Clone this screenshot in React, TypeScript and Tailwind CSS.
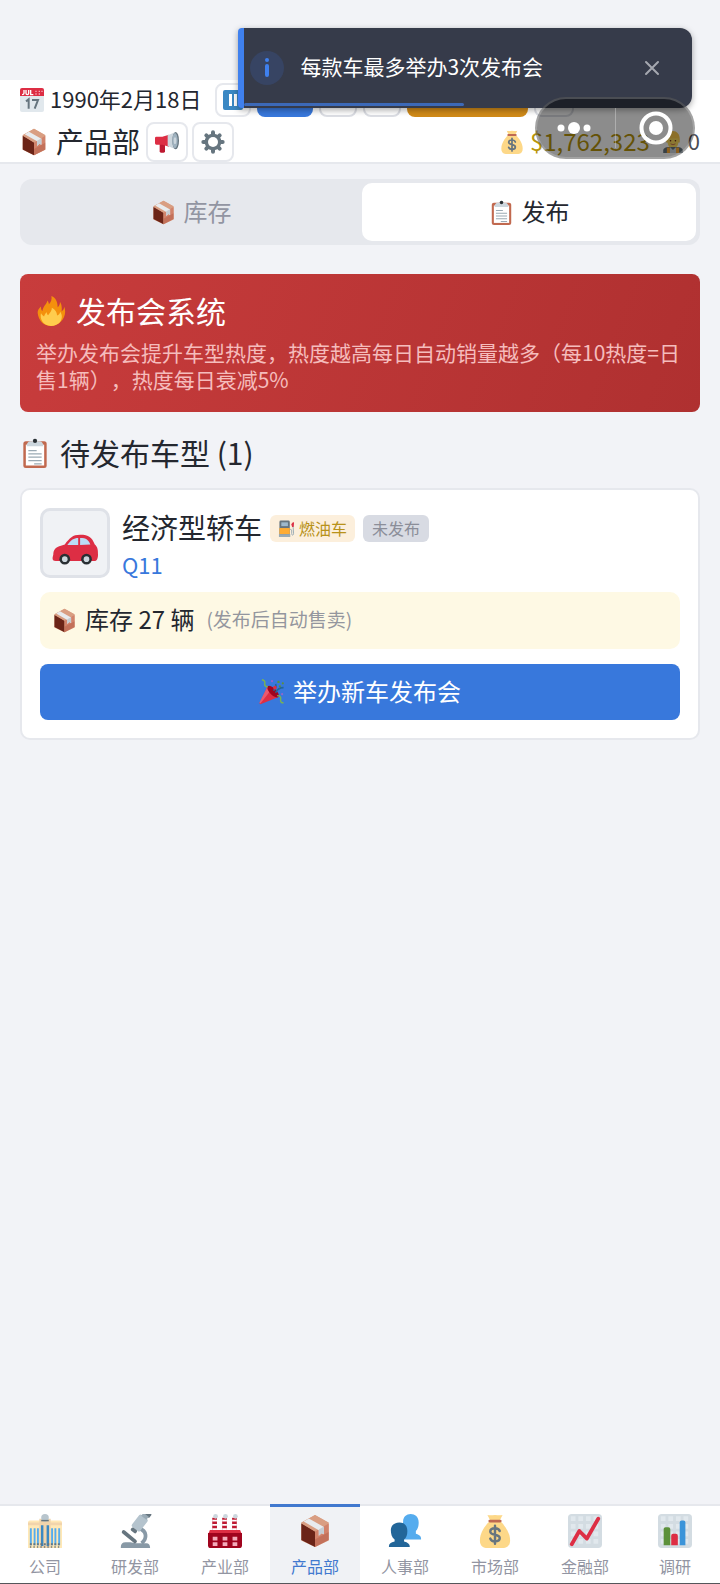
import { useState } from "react";
import type { ReactNode } from "react";

type IconProps = { className?: string };

function Svg({ className, children }: { className?: string; children: ReactNode }) {
  return (
    <svg viewBox="0 0 36 36" className={`shrink-0 ${className ?? ""}`} aria-hidden="true">
      {children}
    </svg>
  );
}

const BoxIcon = ({ className }: IconProps) => (
  <Svg className={className}>
    <path fill="#d99e82" d="M18 1 32.500 9v19L18 35 3.500 28V9z" />
    <path fill="#6b2417" d="M3.500 10 18 18.500V35L3.500 27.500z" />
    <path fill="#d2836b" d="M18 18.500 32.500 10v17.500L18 35z" />
    <path fill="#a8513b" d="M18 27 32.500 19v8.500L18 35z" opacity=".35" />
    <path fill="#d99e82" d="M18 1 32.500 9.500 18 18.500 3.500 9.500z" />
    <path fill="#e8ebee" d="M6 8 11.500 4.800 27.500 13.800v7.700l-2.500-1.200-3 2.800v-6z" />
    <path fill="#c5cdd3" d="m22 16.300 5.500-3v8.200L25 20.300l-3 2.800z" />
  </Svg>
);

const CalendarIcon = ({ className }: IconProps) => (
  <Svg className={className}>
    <path fill="#e1e8ed" d="M0 10h36v23a3 3 0 0 1-3 3H3a3 3 0 0 1-3-3z" />
    <path fill="#dd2e44" d="M3 0h30a3 3 0 0 1 3 3v9H0V3a3 3 0 0 1 3-3z" />
    <path stroke="#fff" strokeWidth="2" fill="none" d="M6 3v5q0 2-3 2M9 3v5q0 2 2 2t2-2V3M16 3v7h4" />
    <path fill="#f4abba" d="M23 4h2v2h-2zM28 4h2v2h-2zM32 4h2v2h-2zM23 8h2v2h-2zM28 8h2v2h-2z" />
    <path fill="none" stroke="#66757f" strokeWidth="3" d="m9 20 4-3v14M18 18h9l-5 13" />
  </Svg>
);

const MegaphoneIcon = ({ className }: IconProps) => (
  <Svg className={className}>
    <path fill="#be1931" d="M7 20h8v12q0 2-2 2H9q-2 0-2-2z" />
    <path fill="#dd2e44" d="M2 10h9l10-3v18l-10-3H2q-2 0-2-2v-8q0-2 2-2z" />
    <path fill="#ccd6dd" d="M19 8 31 3v26l-12-5z" />
    <ellipse cx="31" cy="16" rx="5" ry="13" fill="#66757f" />
    <ellipse cx="30" cy="16" rx="4" ry="11.500" fill="#9fb2bf" />
    <ellipse cx="30" cy="16" rx="2" ry="5" fill="#ccd6dd" />
  </Svg>
);

const GearIcon = ({ className }: IconProps) => (
  <Svg className={className}>
    <g stroke="#66757f" strokeWidth="6" strokeLinecap="round">
      <path d="M18 3.500v29M3.500 18h29M8 8l20 20M28 8 8 28" />
    </g>
    <circle cx="18" cy="18" r="12.500" fill="#66757f" />
    <circle cx="18" cy="18" r="7.500" fill="#fff" />
  </Svg>
);

const MoneyIcon = ({ className }: IconProps) => (
  <Svg className={className}>
    <path fill="#fdd888" d="M12 8h12c5 5 10 12 10 20 0 6-4 8-8 8H10c-4 0-8-2-8-8C2 20 7 13 12 8z" />
    <path fill="#fdd888" d="M10 1c3 1 5 0 8 0s5 1 8 0l-3 6H13z" />
    <rect x="11" y="6" width="14" height="3" rx="1.500" fill="#bf6952" />
    <path
      fill="none"
      stroke="#67757f"
      strokeWidth="2.600"
      strokeLinecap="round"
      d="M23 18q-1-3-5-3-5 0-5 3.500 0 2.500 5 3.500t5 3.500q0 3.500-5 3.500-4 0-5-3M18 12.500v19"
    />
  </Svg>
);

const WorkerIcon = ({ className }: IconProps) => (
  <Svg className={className}>
    <path fill="#ffcc4d" d="M7 13C7 5 12 0 18 0s11 5 11 13v6H7z" />
    <path fill="#ffdc5d" d="M9 12h18v5c0 7-4 11-9 11s-9-4-9-11z" />
    <path fill="#66757f" d="M2 36v-4c0-4 4-6 9-6h14c5 0 9 2 9 6v4z" />
    <path fill="#ffac33" d="M8 27h5v9H8zM23 27h5v9h-5z" />
    <path fill="#ccd6dd" d="m13 26 5 5 5-5v10H13z" />
    <circle cx="14" cy="16" r="1.300" fill="#662113" />
    <circle cx="22" cy="16" r="1.300" fill="#662113" />
    <path d="M14 21q4 3 8 0" stroke="#c1694f" strokeWidth="1.500" fill="none" />
  </Svg>
);

const ClipboardIcon = ({ className }: IconProps) => (
  <Svg className={className}>
    <rect x="4" y="4" width="28" height="32" rx="3" fill="#c1694f" />
    <path fill="#fff" d="M7 8h22v25H7z" />
    <path fill="#ccd6dd" d="M12 4h3a3 3 0 0 1 6 0h3q4 1 4 6H8q0-5 4-6z" />
    <circle cx="18" cy="3.500" r="2.500" fill="#292f33" />
    <path stroke="#9aaab4" strokeWidth="1.500" d="M10 15h10M10 19h16M10 23h16M10 27h16M17 31h9" />
  </Svg>
);

const FireIcon = ({ className }: IconProps) => (
  <Svg className={className}>
    <path
      fill="#f4900c"
      d="M35 19c0-2.100-.4-4.100-1-6-.6 3-1.500 4.500-3.300 5.500.5-2.500.5-8-1.900-11.200-.2 3-.9 4.700-2.800 6.200C26 8 24 2 18.500 0c.7 4.500-.5 7-3 10-.3-2-.9-3.500-2-4.500.1 4-5 6.500-5.800 12.500-1-.8-1.800-2.500-1.700-5.500-2.600 2.100-4.200 4.600-4 8C3 30 9.500 36 18 36s17-7.600 17-17z"
    />
    <path
      fill="#ffcc4d"
      d="M31 25c.1-2-.6-4-2-6-.4 2.500-1.800 4-3.800 4.500C25.500 20 23 16 19 14c.3 3.500-2.500 6-4.500 9-1-.7-1.500-2-1.500-3.500-1.500 1-2.800 3-3.300 5C8 23.500 6.500 22 6 20.500 4 28 9 36 18 36s13-6 13-11z"
    />
  </Svg>
);

const CarIcon = ({ className }: IconProps) => (
  <Svg className={className}>
    <path
      fill="#dd2e44"
      d="M1 24c0-4 2-6 6-7l3-1c4-5 6-7.500 12-7.500 7 0 9 2 11.500 7.500 2.500 2 2.500 5 2.500 8 0 3-1 5-3 5H3q-3 0-2.500-3z"
    />
    <path fill="#bbddf5" d="M12 16.500C15 12.500 17 11 20.500 11v5.500zM22 11c5 0 6.500 1.500 8 5l-8 .5z" />
    <circle cx="10" cy="27.500" r="4.200" fill="#292f33" />
    <circle cx="27" cy="27.500" r="4.200" fill="#292f33" />
    <circle cx="10" cy="27.500" r="2.200" fill="#ccd6dd" />
    <circle cx="27" cy="27.500" r="2.200" fill="#ccd6dd" />
  </Svg>
);

const FuelIcon = ({ className }: IconProps) => (
  <Svg className={className}>
    <path
      fill="none"
      stroke="#99aab5"
      strokeWidth="2"
      d="M25 20h2q2 0 2 3v6q0 3 2 3t2-4l-1-13V8"
    />
    <path fill="#dd2e44" d="m28 9 4-5 2 2-1 9h-3z" />
    <rect x="3" y="1" width="22" height="34" rx="3" fill="#66757f" />
    <path fill="#ffac33" d="M3 17h22v13H3z" />
    <rect x="7" y="5" width="14" height="8" fill="#9fb9cb" />
    <path fill="#99aab5" d="M2 30h24v6H2z" />
  </Svg>
);

const PartyIcon = ({ className }: IconProps) => (
  <Svg className={className}>
    <path fill="#dd2e44" d="M12 10 27 25 2 35q-2 0-1-2z" />
    <path fill="#ea596e" d="m12 10 5 5L2 34q-2 0-1-2z" />
    <ellipse cx="19.500" cy="17.500" rx="4.500" ry="10.500" fill="#a0041e" transform="rotate(-45 19.500 17.500)" />
    <path fill="none" stroke="#226699" strokeWidth="2.200" d="M20 16q5-4 3-9M23 19q3-7 11-7" />
    <path fill="none" stroke="#77b255" strokeWidth="2" d="M4 1q5 1 4 5t4 5M25 23q6 0 5 5t4 5" />
    <g fill="#9266cc">
      <circle cx="18" cy="3" r="1.500" />
      <circle cx="32" cy="21" r="1.500" />
    </g>
    <g fill="#5c913b">
      <circle cx="27" cy="4" r="1.700" />
      <circle cx="33" cy="6" r="1.500" />
      <circle cx="29" cy="10" r="1.500" />
    </g>
    <circle cx="22" cy="12" r="2.500" fill="#dd2e44" />
  </Svg>
);

const OfficeIcon = ({ className }: IconProps) => (
  <Svg className={className}>
    <path fill="#ffe8b6" d="M0 9q0-2 2-2h32q2 0 2 2v27H0z" />
    <path fill="#f1d4ac" d="M12 5h12v31H12zM0 9h12v3H0zM24 9h12v3H24z" />
    <circle cx="18" cy="4" r="4" fill="#b8c5cd" />
    <path stroke="#55acee" strokeWidth="2" d="M3 15v18M7 15v18M10.500 15v18M25.500 15v18M29 15v18M33 15v18" />
    <path stroke="#3b88c3" strokeWidth="2.600" d="M15 12v22M21 12v22" />
    <path stroke="#66757f" strokeWidth="2" strokeDasharray="2 1.700" d="M2 32h32" />
    <path stroke="#66757f" strokeWidth="1.500" strokeDasharray="1.500 2.200" d="M2 35h32" />
    <path stroke="#66757f" strokeWidth="1.500" d="M14 7h8" />
  </Svg>
);

const MicroscopeIcon = ({ className }: IconProps) => (
  <Svg className={className}>
    <path fill="none" stroke="#8899a6" strokeWidth="4" d="M22 15c9 3 9 11 3 16" />
    <path fill="#8899a6" d="M3 35q0-5 5-5h5l6 1h11q4 0 4 5H3z" />
    <path stroke="#66757f" strokeWidth="4" strokeLinecap="round" d="m6 19 12 10" />
    <g transform="rotate(38 22 10)">
      <rect x="17" y="1" width="11" height="16" rx="2" fill="#b4c3cd" />
      <rect x="19" y="17" width="7" height="4" rx="1.500" fill="#66757f" />
      <rect x="18" y="-6" width="9" height="5" rx="1" fill="#66757f" />
      <rect x="19" y="-2" width="7" height="4" fill="#99aab5" />
    </g>
  </Svg>
);

const FactoryIcon = ({ className }: IconProps) => (
  <Svg className={className}>
    {[7, 17.5, 28].map((x) => (
      <g key={x}>
        <path stroke="#be1931" strokeWidth="5" d={`M${x} 4v16`} />
        <path stroke="#fff" strokeWidth="5" strokeDasharray="2 2.500" d={`M${x} 6v11`} />
        <circle cx={x + 1} cy="2.500" r="2.500" fill="#ccd6dd" />
      </g>
    ))}
    <path fill="#dd2e44" d="M2 17h32l2 5H0z" />
    <path fill="#a0041e" d="M0 20h36v13q0 3-3 3H3q-3 0-3-3z" />
    <path fill="#f4abba" d="M5 24h5v4H5zM15.500 24h5v4h-5zM26 24h5v4h-5zM5 30h5v4H5zM15.500 30h5v4h-5zM26 30h5v4h-5z" />
  </Svg>
);

const PeopleIcon = ({ className }: IconProps) => (
  <Svg className={className}>
    <path
      fill="#55acee"
      d="M16 8c0-5 3.500-8 8-8s8.500 3 8.500 9c0 4-1 7-3 9v3c3 1 5.500 2 5.500 5v1H15z"
    />
    <path
      fill="#226699"
      d="M3 17c0-5 4-8 9-8s8.500 3 8.500 9c0 4-1 7-3.500 9v2c4 1 6 3 6 5v1H1v-1c0-3 2-4 6-5v-2c-3-2-4-6-4-10z"
    />
  </Svg>
);

const Grid = () => (
  <>
    <rect x="0" y="0" width="36" height="36" rx="4" fill="#d3dce2" />
    <path
      stroke="#e1e8ed"
      strokeWidth="5"
      strokeDasharray="5 3"
      d="M3 5h31M3 13h31M3 21h31M3 29h31"
    />
  </>
);

const TrendIcon = ({ className }: IconProps) => (
  <Svg className={className}>
    <Grid />
    <path
      fill="none"
      stroke="#dd2e44"
      strokeWidth="4"
      strokeLinecap="round"
      strokeLinejoin="round"
      d="m4 32 8-14 8 8L32 5"
    />
  </Svg>
);

const BarsIcon = ({ className }: IconProps) => (
  <Svg className={className}>
    <Grid />
    <path fill="#5c913b" d="M6 33V16q0-2 2-2h3q2 0 2 2v17z" />
    <path fill="#dd2e44" d="M14 33V23q0-2 2-2h3q2 0 2 2v10z" />
    <path fill="#3b94d9" d="M23 33V9q0-2 2-2h2q2 0 2 2v24z" />
  </Svg>
);

const departments = [
  { name: "公司", Icon: OfficeIcon },
  { name: "研发部", Icon: MicroscopeIcon },
  { name: "产业部", Icon: FactoryIcon },
  { name: "产品部", Icon: BoxIcon },
  { name: "人事部", Icon: PeopleIcon },
  { name: "市场部", Icon: MoneyIcon },
  { name: "金融部", Icon: TrendIcon },
  { name: "调研", Icon: BarsIcon },
];

function Header() {
  return (
    <header className="mt-20 flex flex-col gap-[5px] border-b-2 border-[#e6e8ed] bg-white px-5 pt-[3px]">
      <div className="flex h-[34px] items-center gap-[6px]">
        <CalendarIcon className="size-6" />
        <span className="mr-2 pb-[3px] text-[22px] whitespace-nowrap">1990年2月18日</span>
        <button
          aria-label="暂停"
          className="flex h-[34px] w-9 items-center justify-center rounded-lg border-2 border-[#e6e8ed] bg-white"
        >
          <svg viewBox="0 0 20 20" className="size-5" aria-hidden="true">
            <rect width="20" height="20" rx="2" fill="#3b88c3" />
            <path fill="#fff" d="M6 4h3v12H6zM11 4h3v12h-3z" />
          </svg>
        </button>
        <button aria-label="1倍速" className="h-[34px] w-14 rounded-lg bg-[#3878dc]" />
        <button aria-label="2倍速" className="h-[34px] w-[38px] rounded-lg border-2 border-[#dcdee4] bg-white" />
        <button aria-label="3倍速" className="h-[34px] w-[38px] rounded-lg border-2 border-[#dcdee4] bg-white" />
        <button aria-label="排行" className="h-[34px] w-[121px] rounded-lg bg-[#d08a18]" />
        <button aria-label="存档" className="h-[34px] w-10 rounded-lg border-2 border-[#dcdee4] bg-white" />
      </div>
      <div className="flex h-10 items-center justify-between">
        <div className="flex items-center">
          <BoxIcon className="size-7" />
          <h1 className="ml-2 pb-[3px] text-[28px] leading-9">产品部</h1>
          <button
            aria-label="公告"
            className="ml-[6px] flex h-10 w-[42px] items-center justify-center rounded-lg border-2 border-[#e6e8ed]"
          >
            <MegaphoneIcon className="size-6" />
          </button>
          <button
            aria-label="设置"
            className="ml-1 flex h-10 w-[42px] items-center justify-center rounded-lg border-2 border-[#e6e8ed]"
          >
            <GearIcon className="size-6" />
          </button>
        </div>
        <div className="flex items-center">
          <MoneyIcon className="size-6" />
          <span className="ml-[6px] pb-[3px] text-2xl text-[#b8960c]">$1,762,323</span>
          <WorkerIcon className="ml-3 size-[22px]" />
          <span className="ml-1 pb-[3px] text-[22px] text-[#4a4d55]">0</span>
        </div>
      </div>
    </header>
  );
}

function Toast({ onClose }: { onClose: () => void }) {
  return (
    <div
      role="status"
      className="absolute top-7 right-7 flex h-20 w-[63%] items-center overflow-hidden rounded-l-sm rounded-r-xl border-l-[6px] border-[#3f80ee] bg-[#363b4a] pl-[6px] shadow-[0_2px_6px_rgba(0,0,0,0.35)]"
    >
      <span className="flex size-[34px] items-center justify-center rounded-full bg-[#374463]">
        <svg viewBox="0 0 6 20" className="h-5 w-[6px]" aria-hidden="true">
          <circle cx="3" cy="2" r="2" fill="#3f80ee" />
          <rect x="1" y="6" width="4" height="13" rx="2" fill="#3f80ee" />
        </svg>
      </span>
      <p className="ml-4 pb-[3px] text-[21px] text-white">每款车最多举办3次发布会</p>
      <button aria-label="关闭" onClick={onClose} className="mr-8 ml-auto">
        <svg viewBox="0 0 16 16" className="size-4" aria-hidden="true">
          <path d="m2 2 12 12M14 2 2 14" stroke="#a5a8b0" strokeWidth="2" strokeLinecap="round" />
        </svg>
      </button>
      <span className="absolute bottom-[2px] left-0 h-[3px] w-[49%] rounded-full bg-[#3c69b8]" />
    </div>
  );
}

// Host app's floating menu / close capsule
function Capsule() {
  return (
    <div className="absolute top-[97px] right-[25px] flex h-[62px] w-40 items-center rounded-full border-2 border-white/20 bg-black/45">
      <button aria-label="更多" className="flex h-full flex-1 items-center justify-center pr-1">
        <svg viewBox="0 0 36 14" className="h-[14px] w-9" aria-hidden="true">
          <circle cx="5" cy="7" r="3.500" fill="#fff" />
          <circle cx="18" cy="7" r="6" fill="#fff" />
          <circle cx="31" cy="7" r="3.500" fill="#fff" />
        </svg>
      </button>
      <span className="h-10 w-px bg-white/30" />
      <button aria-label="退出" className="flex h-full flex-1 items-center justify-center pl-1">
        <svg viewBox="0 0 34 34" className="size-[34px]" aria-hidden="true">
          <circle cx="17" cy="17" r="14.500" fill="none" stroke="#fff" strokeWidth="4" />
          <circle cx="17" cy="17" r="7" fill="#fff" />
        </svg>
      </button>
    </div>
  );
}

export default function App() {
  const [tab, setTab] = useState<"stock" | "launch">("launch");
  const [department, setDepartment] = useState("产品部");
  const [showToast, setShowToast] = useState(true);

  const tabs = [
    { key: "stock" as const, label: "库存", Icon: BoxIcon },
    { key: "launch" as const, label: "发布", Icon: ClipboardIcon },
  ];

  return (
    <div className="relative flex min-h-screen flex-col bg-[#f2f3f7] font-['Noto_Sans_CJK_SC',sans-serif] text-[#24272f]">
      <Header />

      <main className="flex-1 px-5 pt-[15px]">
        {/* Tabs */}
        <div className="grid grid-cols-2 gap-1 rounded-xl bg-[#e6e8ed] p-1">
          {tabs.map(({ key, label, Icon }) => (
            <button
              key={key}
              onClick={() => setTab(key)}
              className={`flex h-[58px] items-center justify-center gap-2 rounded-[10px] text-2xl ${
                tab === key ? "bg-white" : "text-[#9295a2]"
              }`}
            >
              <Icon className="size-[25px]" />
              <span className="pb-[3px]">{label}</span>
            </button>
          ))}
        </div>

        {/* Launch event info */}
        <section className="mt-[29px] rounded-lg bg-linear-110 from-[#c83c3c] to-[#af3030] px-4 py-[19px]">
          <h2 className="flex h-9 items-center gap-[10px] text-[30px] leading-9 text-white">
            <FireIcon className="size-[30px]" />
            <span className="pb-[3px]">发布会系统</span>
          </h2>
          <p className="mt-[10px] text-[21px] leading-[27px] text-[#f5bcbc] [text-spacing-trim:space-all]">
            举办发布会提升车型热度，热度越高每日自动销量越多（每10热度=日售1辆），热度每日衰减5%
          </p>
        </section>

        <h2 className="mt-[23px] mb-[17px] flex h-9 items-center gap-[10px] text-[30px] leading-9">
          <ClipboardIcon className="size-[30px]" />
          <span className="pb-[3px]">待发布车型 (1)</span>
        </h2>

        {/* Car card */}
        <article className="rounded-[10px] border-2 border-[#e6e8ed] bg-white px-[18px] py-[18px]">
          <div className="flex gap-3">
            <div className="flex size-[70px] items-center justify-center rounded-[10px] border-3 border-[#dfe2e8] bg-[#f0f2f5] pt-2">
              <CarIcon className="size-[46px]" />
            </div>
            <div>
              <div className="flex h-10 items-center gap-2">
                <h3 className="pb-[3px] text-[28px]">经济型轿车</h3>
                <span className="flex h-[27px] items-center gap-1 rounded-md bg-[#fcefdc] px-2 text-[16px] text-[#b8921a]">
                  <FuelIcon className="size-[17px]" />
                  燃油车
                </span>
                <span className="flex h-[27px] items-center rounded-md bg-[#d8dbe3] px-[9px] text-[16px] text-[#8b8e99]">
                  未发布
                </span>
              </div>
              <p className="text-[22px] leading-8 text-[#3878dc]">Q11</p>
            </div>
          </div>
          <div className="mt-3 flex h-[57px] items-center gap-2 rounded-[10px] bg-[#fef9e4] px-3 text-2xl">
            <BoxIcon className="size-[25px]" />
            <span className="pb-[3px]">库存 27 辆</span>
            <span className="ml-1 pb-[3px] text-[19px] text-[#94969e]">(发布后自动售卖)</span>
          </div>
          <button className="mt-[15px] flex h-14 w-full items-center justify-center gap-2 rounded-lg bg-[#3878dc] text-2xl text-white">
            <PartyIcon className="size-[26px]" />
            <span className="pb-[3px]">举办新车发布会</span>
          </button>
        </article>
      </main>

      <nav className="grid grid-cols-8 border-b border-[#55565a] bg-white">
        {departments.map(({ name, Icon }) => (
          <button
            key={name}
            onClick={() => setDepartment(name)}
            className={`flex h-[79px] flex-col items-center text-[16px] ${
              department === name
                ? "border-t-3 border-[#4179cf] bg-[#f0f2f5] pt-[7px] text-[#4179cf]"
                : "border-t-2 border-[#e6e8ed] pt-2 text-[#9295a2]"
            }`}
          >
            <Icon className="size-[34px]" />
            <span className="mt-[6px] leading-6">{name}</span>
          </button>
        ))}
      </nav>

      {showToast && <Toast onClose={() => setShowToast(false)} />}
      <Capsule />
    </div>
  );
}
